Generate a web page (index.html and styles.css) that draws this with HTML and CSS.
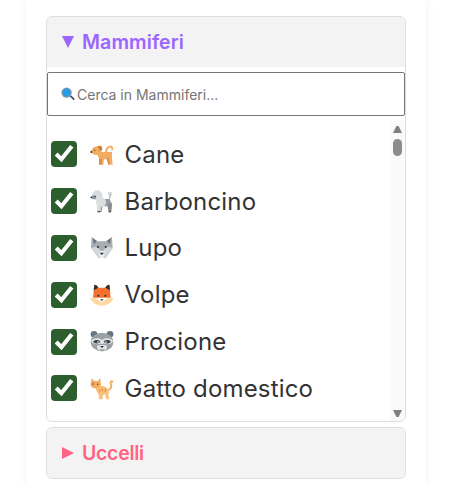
FILE: index.html
```html
<!DOCTYPE html>
<html lang="it">
<head>
<meta charset="utf-8">
<title>Animali</title>
<link rel="stylesheet" href="styles.css">
</head>
<body>
<main class="card">
  <section class="group">
    <header class="group-head purple"><span class="tri tri-down"></span><h2>Mammiferi</h2></header>
    <div class="search">
      <svg class="search-icon" viewBox="0 0 14 14"><path d="M8.600 9.200l1.200-1.200 3.500 3.600a.85.85 0 0 1-1.200 1.200z" fill="#3f4f63"/><circle cx="5.600" cy="5.600" r="5.200" fill="#8a9aa6"/><circle cx="5.600" cy="5.600" r="4.200" fill="#2a9be0"/></svg>
      <input type="text" placeholder="Cerca in Mammiferi...">
    </div>
    <div class="list">
      <div class="rows">
      <label class="row"><input type="checkbox" checked>
        <svg class="emoji" viewBox="0 0 72 72"><path d="M48 32C48 14 67 7 67 22" fill="none" stroke="#f4ac62" stroke-width="6" stroke-linecap="round"/><path d="M20 30h46v18l2 20h-8l-6-16H42l-2 16H28l-1-18z" fill="#f4ac62"/><path d="M36 50l-2 18h-6l-1-18zM56 46l4 22h-5l-5-18z" fill="#d98c48"/><path d="M3 28c3-9 10-17 23-15 7 2 10 8 9 14-2 6-9 12-17 12-6 0-14-4-15-11z" fill="#f4ac62"/><path d="M23 12c7-3 15 0 14 9-1 5-7 7-9 2z" fill="#c9803f"/><circle cx="4" cy="30" r="3" fill="#4a3a30"/><circle cx="14" cy="25" r="2" fill="#4a3a30"/></svg>
        <span>Cane</span></label>
      <label class="row"><input type="checkbox" checked>
        <svg class="emoji" viewBox="0 0 72 72"><path d="M26 30h32l8 14-2 24h-7l-4-16H38l-3 16h-9z" fill="#969da2"/><circle cx="22" cy="19" r="15" fill="#d9dcde"/><circle cx="33" cy="40" r="15" fill="#dcdfe1"/><circle cx="60" cy="14" r="6" fill="#d0d3d5"/><path d="M58 32l3-14" stroke="#969da2" stroke-width="3"/><path d="M2 25c4-7 12-8 16-4v8c-6 3-14 2-16-4z" fill="#8d9aa3"/><circle cx="4" cy="25" r="2.500" fill="#333"/><circle cx="15" cy="22" r="2" fill="#333"/><path d="M58 42c6-1 8 4 7 9l-2 19h-7l-3-18z" fill="#858c91"/><path d="M20 50h12v20h-10z" fill="#d9dcde"/><path d="M22 66h10v4H22zM56 66h7v4h-7z" fill="#555"/></svg>
        <span>Barboncino</span></label>
      <label class="row"><input type="checkbox" checked>
        <svg class="emoji" viewBox="0 0 72 72"><path d="M5 3l18 13h24L66 3l2 33-4 6-18 24H26L8 42 3 36z" fill="#a6adb3"/><path d="M3 36l14-4 11 7 4 27c-3 0-6-2-7-3L8 42z" fill="#d2d8dc"/><path d="M68 36l-14-4-11 7-4 27c3 0 6-2 7-3l18-21z" fill="#d2d8dc"/><path d="M27 44h17l-3 22H30z" fill="#eceeef"/><path d="M8 6l12 9-8 10zM63 6L51 15l8 10z" fill="#66757f"/><circle cx="24" cy="33" r="3" fill="#292f33"/><circle cx="47" cy="33" r="3" fill="#292f33"/><path d="M29 50h13l-6.500 7z" fill="#292f33"/></svg>
        <span>Lupo</span></label>
      <label class="row"><input type="checkbox" checked>
        <svg class="emoji" viewBox="0 0 72 72"><path d="M11 24l2-19c5 0 9 3 12 9h21c3-6 7-9 12-9l2 19 2 20H9z" fill="#f4702c"/><path d="M11 22l2-17c5 0 9 3 12 9zM60 22L58 5c-5 0-9 3-12 9z" fill="#292f33"/><path d="M1 46c9-3 20-1 26 6l8 6 9-6c6-7 17-9 26-6-3 14-20 22-34 22S4 60 1 46z" fill="#ffd9a3"/><circle cx="25" cy="38" r="3" fill="#292f33"/><circle cx="46" cy="38" r="3" fill="#292f33"/><path d="M30 49h11l-5.500 5z" fill="#292f33"/></svg>
        <span>Volpe</span></label>
      <label class="row"><input type="checkbox" checked>
        <svg class="emoji" viewBox="0 0 72 72"><circle cx="12" cy="13" r="10" fill="#66757f"/><circle cx="60" cy="13" r="10" fill="#66757f"/><ellipse cx="36" cy="36" rx="34" ry="28" fill="#99a0a6"/><path d="M3 33c6-9 22-12 33-3 11-9 27-6 33 3-4 10-20 12-28 7l-5 3-5-3C25 45 7 43 3 33z" fill="#e6e7e8"/><path d="M9 35c4-7 16-6 22-1 0 7-17 9-22 1zM63 35c-4-7-16-6-22-1 0 7 17 9 22 1z" fill="#3f4549"/><circle cx="24" cy="36" r="2.500" fill="#fff"/><circle cx="48" cy="36" r="2.500" fill="#fff"/><path d="M21 48c4-4 26-4 30 0 0 11-8 17-15 17s-15-6-15-17z" fill="#e6e7e8"/><path d="M30 48h12l-6 6z" fill="#292f33"/><path d="M29 59c4 2 10 2 14 0" stroke="#292f33" stroke-width="2" fill="none"/></svg>
        <span>Procione</span></label>
      <label class="row"><input type="checkbox" checked>
        <svg class="emoji" viewBox="0 0 72 72"><path d="M50 44c14-3 17-14 12-22-1-4 2-9 5-5" fill="none" stroke="#f4ac62" stroke-width="6" stroke-linecap="round"/><path d="M16 30c14-3 30 0 38 8 4 6 2 14 1 18l3 14h-9l-4-16-6 4-1 12H27l-1-14-7-12z" fill="#f9c27c"/><path d="M5 7l8 8h11l6-9 3 19c-2 9-10 13-18 12C7 36 0 30 2 24z" fill="#f4ac62"/><circle cx="9" cy="24" r="2.200" fill="#4a3a30"/><circle cx="23" cy="25" r="2.200" fill="#4a3a30"/><path d="M36 36l2 10M45 38l1 10M28 40l3 7" stroke="#e08a45" stroke-width="3"/></svg>
        <span>Gatto domestico</span></label>
      </div>
      <div class="scrollbar">
        <span class="arrow arrow-up"></span>
        <span class="thumb"></span>
        <span class="arrow arrow-down"></span>
      </div>
    </div>
  </section>
  <section class="group">
    <header class="group-head pink"><span class="tri tri-right"></span><h2>Uccelli</h2></header>
  </section>
</main>
</body>
</html>
```
FILE: styles.css
```css
* { box-sizing: border-box; }
html, body { height: 100%; }
body {
  margin: 0;
  overflow: hidden;
  background: #fff;
  font-family: Inter, "Liberation Sans", sans-serif;
}
.card {
  width: 400px;
  height: 484px;
  margin-left: 26px;
  padding: 16px 20px 0;
  display: flex;
  flex-direction: column;
  gap: 5px;
  background: #fff;
  box-shadow: 0 0 10px rgba(0, 0, 0, 0.06);
}
.group {
  border: 1px solid #ddd;
  border-radius: 6px;
  overflow: hidden;
}
.group-head {
  height: 50px;
  padding-left: 15px;
  display: flex;
  align-items: center;
  gap: 8px;
  background: #f3f3f3;
}
.group-head h2 {
  margin: 0;
  font-size: 19.5px;
  font-weight: 600;
  letter-spacing: 0.1px;
}
.purple { color: #9b66ff; }
.pink { color: #ff6384; }
.pink h2 { letter-spacing: -0.3px; }
.tri { width: 12px; height: 12px; background: currentColor; }
.tri-down { clip-path: polygon(0 0, 100% 0, 50% 100%); }
.tri-right { clip-path: polygon(0 0, 100% 50%, 0 100%); }
.search {
  position: relative;
  margin-top: 5px;
}
.search input {
  display: block;
  width: 100%;
  height: 44px;
  padding: 0 0 0 29px;
  border: 1px solid #767676;
  border-radius: 2px;
  font: 14px Inter, "Liberation Sans", sans-serif;
  background: #fff;
}
.search input::placeholder { color: #757575; }
.search-icon {
  position: absolute;
  left: 14px;
  top: 15px;
  width: 14px;
  height: 14px;
}
.list {
  height: 300px;
  margin-top: 5px;
  display: flex;
}
.rows {
  flex: 1;
  padding-top: 10px;
}
.scrollbar {
  width: 15px;
  padding: 5px 3px 4px;
  display: flex;
  flex-direction: column;
  background: #fafafa;
}
.arrow { height: 7px; background: #808080; }
.arrow-up { clip-path: polygon(38% 0, 62% 0, 100% 100%, 0 100%); }
.arrow-down { margin-top: auto; clip-path: polygon(0 0, 100% 0, 62% 100%, 38% 100%); }
.thumb {
  height: 17px;
  margin-top: 6px;
  border-radius: 5px;
  background: #8c8c8c;
}
.row {
  height: 46.8px;
  display: flex;
  align-items: center;
  padding-left: 3.6px;
  font-size: 24px;
  letter-spacing: 0.17px;
  color: #333;
}
.row input {
  width: 13px;
  height: 13px;
  margin: 0;
  zoom: 2;
  accent-color: #2c5f2d;
}
.emoji {
  width: 24px;
  height: 24px;
  margin: 0 11px 0 13px;
}
```
